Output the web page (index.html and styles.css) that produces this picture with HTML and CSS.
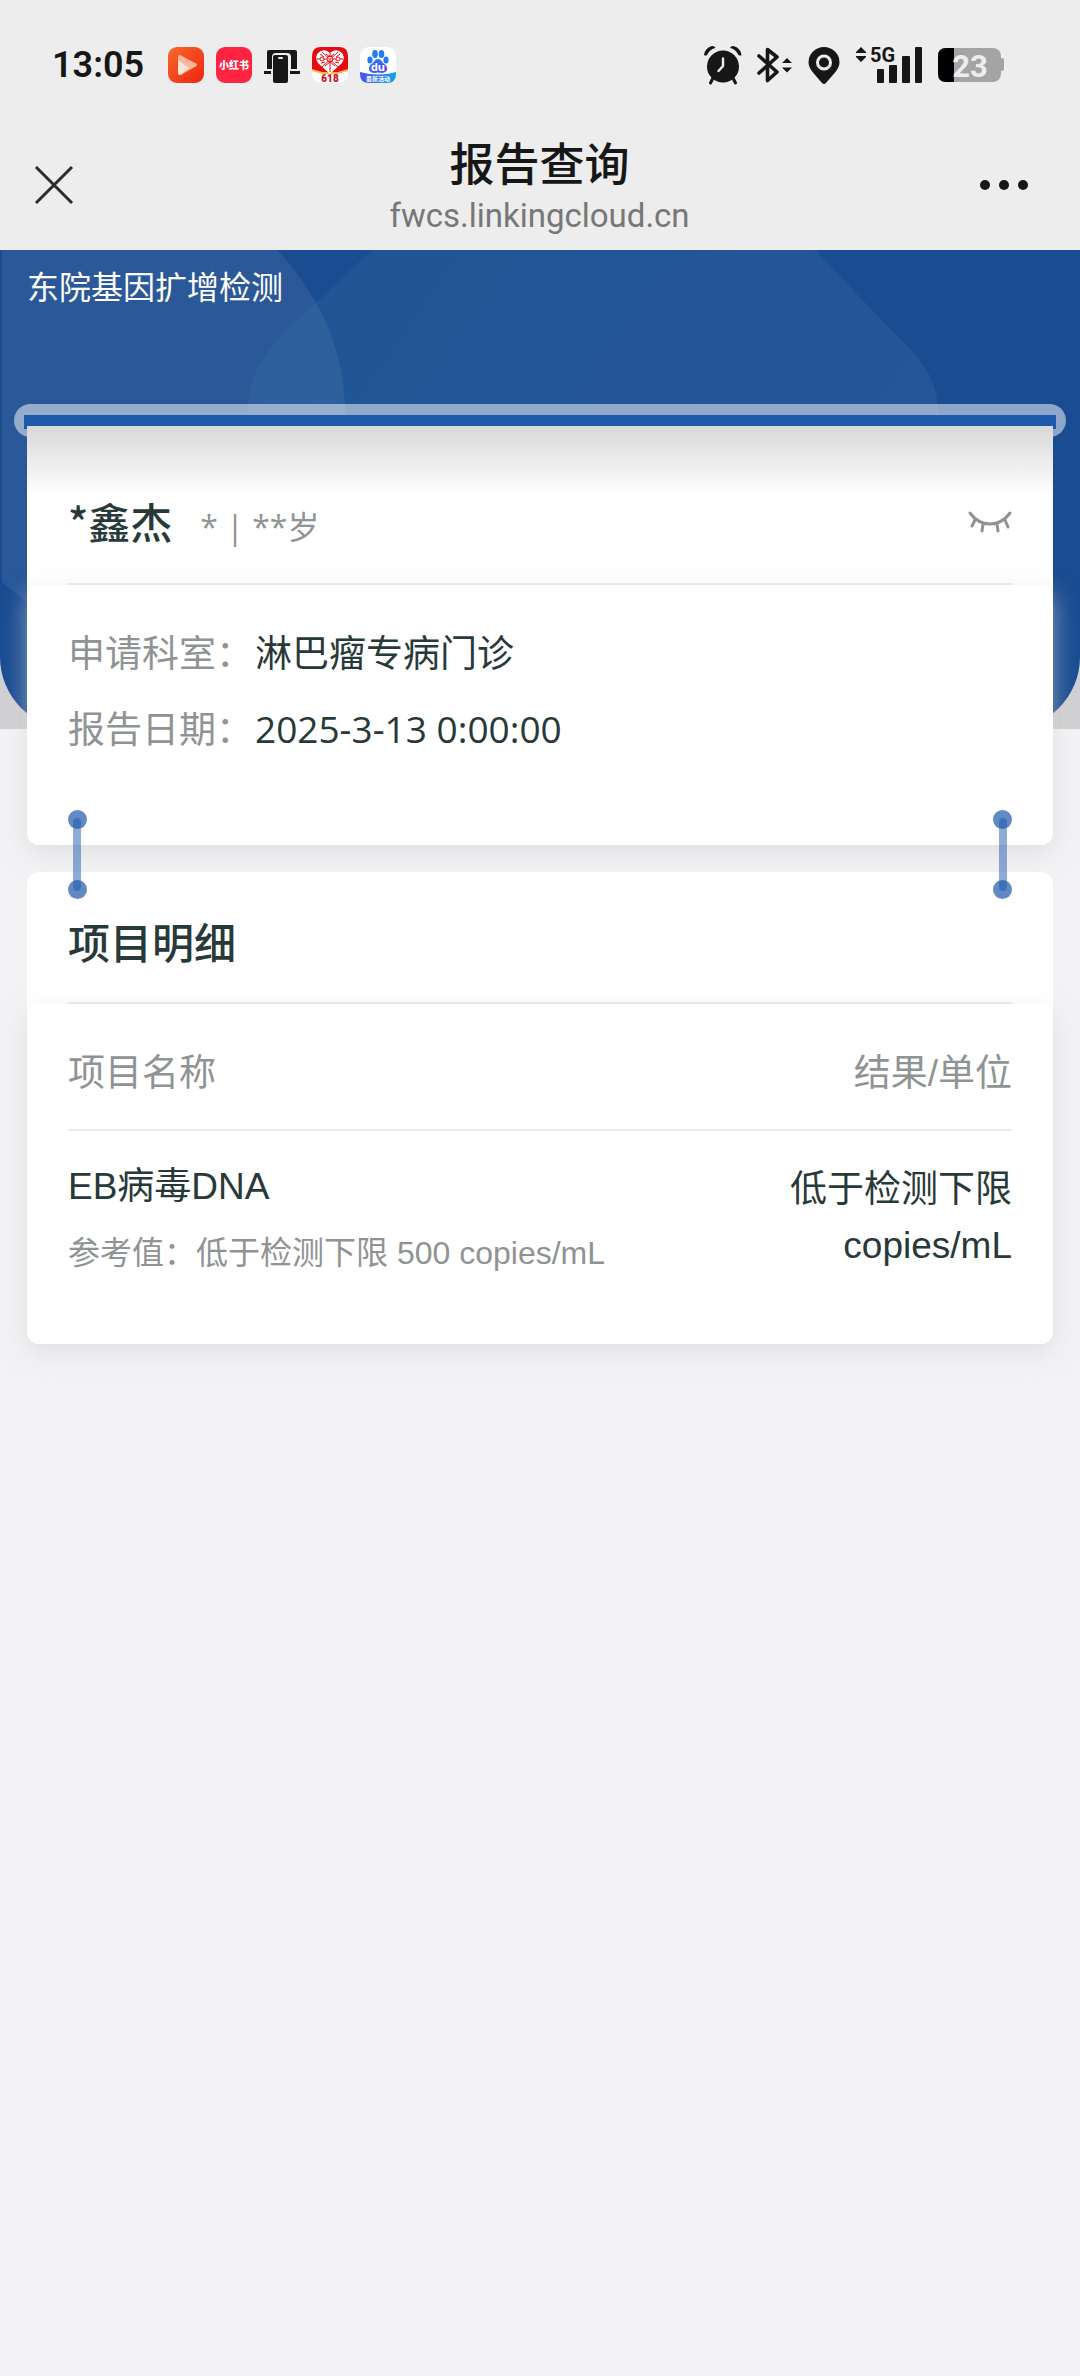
FILE: index.html
```html
<!DOCTYPE html>
<html lang="zh-CN">
<head>
<meta charset="utf-8">
<meta name="viewport" content="width=device-width, initial-scale=1">
<title>报告查询</title>
<link rel="stylesheet" href="styles.css">
</head>
<body>
<header class="top">
  <div class="status">
    <span class="clock">13:05</span>
    <div class="apps">
      <svg width="36" height="36" viewBox="0 0 36 36">
        <defs><linearGradient id="video" x1="0" y1="0" x2="1" y2="1"><stop offset="0" stop-color="#f9692c"/><stop offset="1" stop-color="#ee2410"/></linearGradient></defs>
        <rect width="36" height="36" rx="9" fill="url(#video)"/>
        <path d="M10 10q0-3 3-1.600l15 8q2 1.300 0 2.800l-15 8.600q-3 1-3-2z" fill="#fbb6a0"/>
        <path d="M10 13l11 8-8 6.500q-3 1-3-2z" fill="#fde3da"/>
      </svg>
      <svg width="36" height="36" viewBox="0 0 36 36">
        <rect width="36" height="36" rx="9" fill="#ff2442"/>
        <text class="app-name" x="18" y="22" text-anchor="middle">小红书</text>
      </svg>
      <svg width="36" height="36" viewBox="0 0 36 36" fill="#171717">
        <path d="M3 5q0-2 2-2h26q2 0 2 2v17h-6V10q0-4-4-4H12Q8 6 8 10v12H3z"/>
        <path d="M0 24h7v3H0zM26 24h10v3H26z"/>
        <rect x="9" y="8" width="15" height="28" rx="2"/>
        <rect x="14" y="10" width="5" height="2" rx="1" fill="#ededed"/>
      </svg>
      <svg width="36" height="36" viewBox="0 0 36 36">
        <rect width="36" height="36" rx="9" fill="#fff"/>
        <path d="M0 23V9q0-9 9-9h18q9 0 9 9v14q-18 6-36 0z" fill="#e60b12"/>
        <path d="M0 22q18 7 36 0v2q-18 7-36 0z" fill="#ffb84d"/>
        <path d="M18 27L6 16Q2 9 7 5q6-4 11 1 5-5 11-1 5 4 1 11z" fill="#fff"/>
        <g fill="none" stroke="#e60b12" stroke-width="1">
          <path d="M10 5l16 15M26 5L10 20M18 6v4M18 14v11M5 12h3M12 12h3M21 12h3M28 12h3M8 7l4 3M28 7l-4 3M14 7l4 3 4-3M13 19l5-4 5 4M9 16l4-1M27 16l-4-1"/>
          <circle cx="18" cy="12" r="3"/><circle cx="10" cy="12" r="2"/><circle cx="26" cy="12" r="2"/>
        </g>
        <text class="app-sale" x="18" y="35" text-anchor="middle">618</text>
      </svg>
      <svg width="36" height="36" viewBox="0 0 36 36">
        <defs>
          <linearGradient id="paw" x1="0" y1="0" x2="1" y2="1"><stop offset="0" stop-color="#1688f6"/><stop offset="1" stop-color="#6a3df0"/></linearGradient>
          <linearGradient id="strip" x1="0" y1="0" x2="1" y2="0"><stop offset="0" stop-color="#4a50f0"/><stop offset="1" stop-color="#12a5e8"/></linearGradient>
        </defs>
        <rect width="36" height="36" rx="9" fill="#fff"/>
        <ellipse cx="10" cy="13" rx="2.600" ry="3.600" fill="#1f7cf5"/><ellipse cx="15" cy="7" rx="2.800" ry="4" fill="#1f7cf5"/>
        <ellipse cx="21.500" cy="7" rx="2.800" ry="4" fill="#1f7cf5"/><ellipse cx="26" cy="13" rx="2.600" ry="3.600" fill="#1f7cf5"/>
        <path d="M18 12q3 0 5 4 5 3 4 7-2 4-9 2.500Q11 27 9 23q-1-4 4-7 2-4 5-4z" fill="url(#paw)"/>
        <text class="app-du" x="18" y="24" text-anchor="middle">du</text>
        <path d="M0 25q18 5 36 0v2q0 9-9 9H9q-9 0-9-9z" fill="url(#strip)"/>
        <text class="app-strip" x="18" y="34" text-anchor="middle">最新活动</text>
      </svg>
    </div>
    <div class="system">
      <svg width="38" height="38" viewBox="0 0 38 38" fill="#171717">
        <circle cx="19" cy="20.500" r="16"/>
        <path d="M0 9Q1 2 8 0q3 0 3.500 2Q6 3 3 9q-2 1-3 0zM37.500 9Q36.500 2 29.500 0q-3 0-3.500 2 5.500 1 8.500 7 2 1 3 0z"/>
        <path d="M9 32l-2.500 5M29 32l2.500 5" stroke="#171717" stroke-width="3" stroke-linecap="round"/>
        <path d="M19 12.500V20l-4.500 5" fill="none" stroke="#ededed" stroke-width="2.400" stroke-linecap="round"/>
      </svg>
      <svg width="36" height="38" viewBox="0 0 36 38" fill="none">
        <path d="M2 10l18 16-9.500 8.500v-31L20 11 2 27" stroke="#171717" stroke-width="3.600" stroke-linejoin="round" stroke-linecap="round"/>
        <path d="M25 17l5-5 5 5zM25 21.500l5 5 5-5z" fill="#171717"/>
      </svg>
      <svg width="32" height="38" viewBox="0 0 32 38">
        <path d="M16 1a15.500 15.500 0 0 1 15.500 15.500c0 7-8 13.500-13.500 20.500q-2 2-4 0C8.500 30 .5 23.500.5 16.500A15.500 15.500 0 0 1 16 1z" fill="#171717"/>
        <circle cx="16" cy="16.500" r="6.500" fill="none" stroke="#ededed" stroke-width="3"/>
      </svg>
      <svg width="68" height="38" viewBox="0 0 68 38" fill="#171717">
        <path d="M1 6l5-5 5 5v1H1zM1 10h10v1l-5 5-5-5z"/>
        <text class="net" x="15" y="16">5G</text>
        <rect x="22" y="23" width="7" height="14" rx="1"/><rect x="34" y="19" width="8" height="18" rx="1"/>
        <rect x="47" y="10" width="8" height="27" rx="1"/><rect x="60" y="1" width="7" height="36" rx="1"/>
      </svg>
      <svg width="66" height="34" viewBox="0 0 66 34">
        <rect width="63" height="34" rx="8" fill="#a4a4a4"/><rect x="62" y="10" width="4" height="13" rx="2" fill="#a4a4a4"/>
        <path d="M16 0H8Q0 0 0 8v18q0 8 8 8h8z"/>
        <text class="charge" x="32" y="29" text-anchor="middle">23</text>
      </svg>
    </div>
  </div>
  <div class="nav">
    <button class="icon-btn" type="button" aria-label="关闭">
      <svg width="40" height="40" viewBox="0 0 40 40"><path d="M2 2l36 36M38 2L2 38" stroke="#2b2b2b" stroke-width="3"/></svg>
    </button>
    <div class="titles">
      <h1 class="title">报告查询</h1>
      <p class="host">fwcs.linkingcloud.cn</p>
    </div>
    <button class="icon-btn" type="button" aria-label="更多">
      <svg width="50" height="12" viewBox="0 0 50 12" fill="#171717"><circle cx="6" cy="6" r="5"/><circle cx="25" cy="6" r="5"/><circle cx="44" cy="6" r="5"/></svg>
    </button>
  </div>
</header>

<main class="page">
  <div class="backdrop">
    <svg class="shapes" viewBox="0 0 1080 479" preserveAspectRatio="none">
      <defs><linearGradient id="lens" x1="0" y1="0" x2="1" y2="0.300"><stop offset="0" stop-color="#3c9ca8" stop-opacity="0.110"/><stop offset="1" stop-color="#8ea6d8" stop-opacity="0.100"/></linearGradient></defs>
      <path d="M2 0H277C320 46 345 100 345 164Q345 250 290 310L200 400Q120 420 50 370L2 332z" fill="#fff" fill-opacity="0.070"/>
      <path d="M372 0L317 52C272 92 248 115 248 164V300H938V164C938 130 925 112 888 77L815 0z" fill="url(#lens)"/>
    </svg>
  </div>
  <p class="lab">东院基因扩增检测</p>
  <div class="slot"><div class="slit"></div></div>

  <section class="card card-first">
    <div class="patient">
      <h2 class="heading">*鑫杰</h2>
      <span class="meta">* | **岁</span>
      <button class="icon-btn eye" type="button" aria-label="显示姓名">
        <svg width="44" height="24" viewBox="0 0 44 24" fill="none" stroke="#8f9393" stroke-width="3" stroke-linecap="round"><path d="M2 2q8 11 20 11T42 2M7 9l-3 6M15 13l-1 7M29 13l1 7M37 9l3 7"/></svg>
      </button>
    </div>
    <dl class="panel facts">
      <div class="fact"><dt>申请科室：</dt><dd>淋巴瘤专病门诊</dd></div>
      <div class="fact"><dt>报告日期：</dt><dd>2025-3-13 0:00:00</dd></div>
    </dl>
  </section>

  <section class="card card-detail">
    <div class="links">
      <svg width="19" height="89" viewBox="0 0 19 89" fill="#1e59ab"><rect x="5" y="8" width="8" height="73" rx="4" fill-opacity="0.500"/><circle cx="9.500" cy="9.500" r="9.500" fill-opacity="0.700"/><circle cx="9.500" cy="79.500" r="9.500" fill-opacity="0.700"/></svg>
      <svg width="19" height="89" viewBox="0 0 19 89" fill="#1e59ab"><rect x="6" y="8" width="8" height="73" rx="4" fill-opacity="0.500"/><circle cx="9.500" cy="9.500" r="9.500" fill-opacity="0.700"/><circle cx="9.500" cy="79.500" r="9.500" fill-opacity="0.700"/></svg>
    </div>
    <div class="detail-head"><h2 class="heading">项目明细</h2></div>
    <div class="panel">
      <table class="results">
        <thead><tr><th scope="col">项目名称</th><th scope="col" class="value">结果/单位</th></tr></thead>
        <tbody><tr>
          <td>EB病毒DNA<p class="range">参考值：低于检测下限 500 copies/mL</p></td>
          <td class="value">低于检测下限<br>copies/mL</td>
        </tr></tbody>
      </table>
    </div>
  </section>
</main>
</body>
</html>
```
FILE: styles.css
```css
* { box-sizing: border-box; margin: 0; padding: 0; }

body {
  background: #f3f3f6;
  color: #283939;
  font-family: "Liberation Sans", "Noto Sans CJK SC", sans-serif;
  font-size: 37px;
  line-height: 56px;
}

svg { display: block; flex: none; overflow: visible; }

/* system bar and page title */
.top { background: #ededed; color: #171717; }
.status { display: flex; align-items: center; height: 130px; padding: 0 76px 0 52px; }
.clock { width: 116px; font: 600 36px/44px Roboto, sans-serif; }
.apps { display: flex; gap: 12px; }
.system { display: flex; align-items: center; gap: 15px; margin-left: auto; }
.app-name { font: 900 10px "Noto Sans CJK SC", sans-serif; fill: #fff; }
.app-sale { font: 900 10px Roboto, sans-serif; fill: #c8101c; }
.app-du { font: 700 11px "Open Sans", sans-serif; fill: #fff; }
.app-strip { font: 700 6px "Noto Sans CJK SC", sans-serif; fill: #fff; }
.net { font: 700 20px Roboto, sans-serif; }
.charge { font: 700 31px Roboto, sans-serif; fill: #ededed; }

.nav { display: flex; align-items: center; justify-content: space-between; height: 120px; padding: 0 51px 10px 34px; }
.icon-btn { display: flex; align-items: center; width: 50px; height: 50px; border: 0; background: none; }
.titles { flex: 1; text-align: center; padding: 6px 0 0 16px; }
.title { font: 500 45px/56px "Noto Sans CJK SC", sans-serif; }
.host { color: #777; font: 400 33px/52px Roboto, sans-serif; }

/* report */
.page { position: relative; padding: 14px 27px 60px; }
.backdrop { position: absolute; inset: 0 0 auto; height: 479px; background: #d0d0d2; z-index: -1; }
.shapes { width: 100%; height: 100%; border-radius: 0 0 72px 72px; background: #1a4c92; overflow: hidden; }
.lab { color: #fff; font-size: 32px; line-height: 48px; }
.slot { margin: 92px -13px 0; height: 33px; padding: 11px 10px 0; border-radius: 17px; background: rgba(255, 255, 255, 0.5); }
.slit { height: 14px; background: #1e59ab; }

.card { position: relative; border-radius: 12px; background: #fff; }
.card-first { margin-top: -11px; border-radius: 0 0 12px 12px; background: linear-gradient(#d8d8d8, #fff 70px); }
.card-detail { margin-top: 27px; }
.panel { padding: 0 41px; border-radius: 12px; background: #fff; box-shadow: 0 8px 24px rgba(210, 210, 212, 0.6); }
.heading { font: 500 42px/60px "Noto Sans CJK SC", sans-serif; }

.patient { display: flex; align-items: baseline; margin: 0 41px; padding: 65px 0 28px; border-bottom: 2px solid #ececec; }
.meta { margin-left: 28px; color: #8f9393; font-family: "Open Sans", "Noto Sans CJK SC", sans-serif; font-size: 32px; }
.eye { align-self: center; width: 44px; margin-left: auto; }

.facts { padding-top: 30px; padding-bottom: 78px; }
.fact { display: flex; align-items: baseline; gap: 2px; height: 76px; line-height: 76px; }
dt { color: #8f9393; }
dd { font-family: "Open Sans", "Noto Sans CJK SC", sans-serif; }

/* rings that join the two cards */
.links { position: absolute; top: -62px; left: 41px; right: 41px; display: flex; justify-content: space-between; z-index: 1; }
.detail-head { margin: 0 41px; padding: 39px 0 31px; border-bottom: 2px solid #ececec; }

.results { width: 100%; border-collapse: collapse; }
th { padding: 40px 0 25px; border-bottom: 2px solid #ececec; color: #8f9393; font-weight: 400; line-height: 60px; text-align: left; }
td { padding: 28px 0 63px; vertical-align: top; }
.value { text-align: right; }
td.value { padding-top: 31px; }
.range { margin-top: 10px; color: #8f9393; font-size: 32px; }
```
